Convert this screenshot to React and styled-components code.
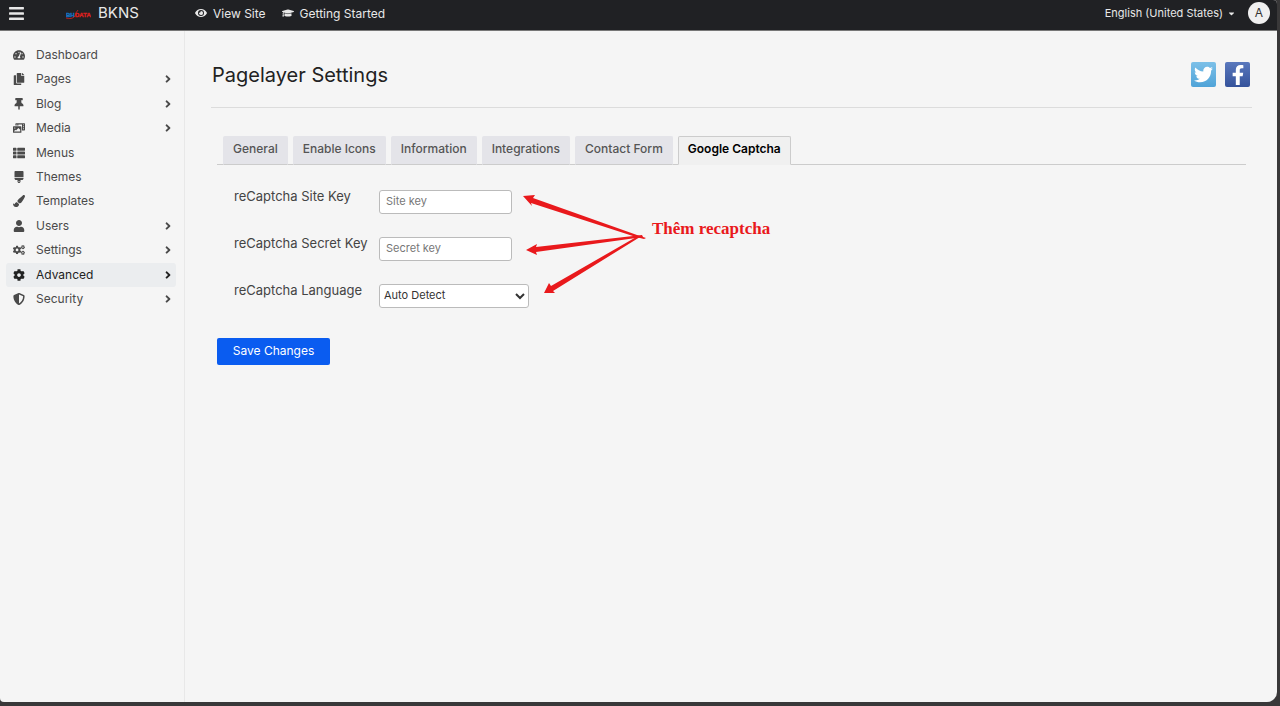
import React from "react";
import styled, { createGlobalStyle, css } from "styled-components";
import {
  FaBars, FaEye, FaGraduationCap, FaCaretDown, FaTachometerAlt, FaCopy, FaThumbtack,
  FaPhotoVideo, FaThList, FaBrush, FaPaintBrush, FaUser, FaCogs, FaCog, FaShieldAlt,
  FaAngleRight, FaTwitter, FaFacebookF,
} from "react-icons/fa";

const GlobalStyle = createGlobalStyle`
  *, *::before, *::after { box-sizing: border-box; }
  body {
    margin: 0;
    background: #393839;
    color: #444;
    font: 400 12px/18px Inter, "Liberation Sans", sans-serif;
  }
  button, input, select { font: inherit; }
`;

const Window = styled.div`
  display: flex;
  flex-direction: column;
  min-height: calc(100vh - 4px);
  margin: 0 3px 4px 0;
  overflow: hidden;
  background: #f5f5f5;
  border-radius: 0 4px 10px 4px;
`;

const TopBar = styled.header`
  display: flex;
  align-items: center;
  height: 31px;
  padding: 0 7px 4px 8px;
  background: #202124;
  border-bottom: 1px solid #777;
  color: #e8e8e8;
`;

const MenuButton = styled.button`
  display: flex;
  padding: 0;
  border: 0;
  background: none;
  color: inherit;
  font-size: 17px;
`;

const Brand = styled.a`
  display: flex;
  align-items: center;
  gap: 7px;
  width: 129px;
  margin-left: 41px;
  color: inherit;
  font-size: 15px;
  text-decoration: none;
`;

const TopLink = styled.a`
  display: flex;
  align-items: center;
  gap: 6px;
  margin-right: 16px;
  padding-top: 2px;
  color: inherit;
  text-decoration: none;
  svg { width: auto; height: 12px; margin-bottom: 2px; }
`;

const LanguageButton = styled.button`
  display: flex;
  align-items: center;
  gap: 4px;
  margin-left: auto;
  padding: 0;
  border: 0;
  background: none;
  color: inherit;
  font-size: 11px;
  svg { font-size: 9px; }
`;

const Avatar = styled.button`
  width: 22px;
  height: 22px;
  margin-left: 12px;
  padding: 0;
  border: 0;
  border-radius: 50%;
  background: #f0f0f0;
  color: #333;
  line-height: 22px;
`;

const Body = styled.div`
  display: flex;
  flex: 1;
`;

const Sidebar = styled.nav`
  flex: 0 0 185px;
  padding: 12px 8px 12px 6px;
  border-right: 1px solid #e8e8e8;
`;

const MenuList = styled.ul`
  display: flex;
  flex-direction: column;
  justify-content: space-between;
  min-height: 268px;
  margin: 0;
  padding: 0;
  list-style: none;
`;

const MenuLink = styled.a`
  display: grid;
  grid-template-columns: 14px 1fr auto;
  align-items: center;
  column-gap: 10px;
  height: 24px;
  padding: 0 2px 0 6px;
  border-radius: 3px;
  color: #4a4a4a;
  text-decoration: none;
  > svg:first-child { justify-self: center; width: auto; height: 12px; }
  > svg:last-child { font-size: 12px; }
  ${(p) => p.$active && css`
    background: #ebedef;
    color: #222;
  `}
`;

const Main = styled.main`
  flex: 1;
  min-width: 0;
  padding: 26px 25px 26px 26px;
`;

const PageHead = styled.div`
  display: flex;
  align-items: flex-start;
  justify-content: space-between;
  padding: 5px 2px 19px 1px;
  border-bottom: 1px solid #dcdcdc;
`;

const Title = styled.h1`
  margin: 0;
  color: #222;
  font-size: 20px;
  font-weight: 400;
  line-height: 26px;
`;

const Social = styled.div`
  display: flex;
  gap: 9px;
`;

const SocialLink = styled.a`
  display: flex;
  align-items: center;
  justify-content: center;
  width: 25px;
  height: 25px;
  border-radius: 2px;
  background: ${(p) => p.$fill};
  color: #fff;
  font-size: 20px;
`;

const Panel = styled.form`
  padding: 28px 6px 0;
`;

const TabList = styled.div`
  display: flex;
  gap: 5px;
  padding-left: 6px;
  border-bottom: 1px solid #ccc;
`;

const Tab = styled.button`
  height: 29px;
  margin-bottom: -1px;
  padding: 0 9px 3px;
  border: 1px solid ${(p) => (p.$active ? "#ccc" : "#e4e4e9")};
  border-bottom-color: ${(p) => (p.$active ? "#f0f0f0" : "#ccc")};
  border-radius: 2px 2px 0 0;
  background: ${(p) => (p.$active ? "#f0f0f0" : "#e4e4e9")};
  color: ${(p) => (p.$active ? "#000" : "#555")};
  font-weight: ${(p) => (p.$active ? 600 : 500)};
`;

const Fields = styled.div`
  position: relative;
  display: grid;
  row-gap: 20px;
  padding: 22px 0 30px 17px;
`;

const Field = styled.div`
  display: grid;
  grid-template-columns: 145px 1fr;
  align-items: end;
`;

const Label = styled.label`
  padding-bottom: 9px;
  color: #444;
  font-size: 13px;
`;

const control = css`
  height: 24px;
  border: 1px solid #bbb;
  border-radius: 3px;
  background: #fff;
  font-size: 11px;
`;

const TextInput = styled.input`
  ${control}
  width: 133px;
  padding: 0 6px 2px;
  &::placeholder { color: #777; }
`;

const Select = styled.select`
  ${control}
  width: 150px;
  padding: 0 0 2px;
  color: #333;
`;

const SaveButton = styled.button`
  width: 113px;
  height: 27px;
  padding: 0 0 2px;
  border: 0;
  border-radius: 2px;
  background: #0a5cf0;
  color: #fff;
`;

const Note = styled.div`
  position: absolute;
  top: 30px;
  left: 306px;
  display: flex;
  gap: 6px;
  color: #e9191c;
  pointer-events: none;
  span {
    padding-top: 24px;
    font: 700 17px/20px "Liberation Serif", serif;
  }
`;

const MENU = [
  ["Dashboard", FaTachometerAlt, false],
  ["Pages", FaCopy, true],
  ["Blog", FaThumbtack, true],
  ["Media", FaPhotoVideo, true],
  ["Menus", FaThList, false],
  ["Themes", FaBrush, false],
  ["Templates", FaPaintBrush, false],
  ["Users", FaUser, true],
  ["Settings", FaCogs, true],
  ["Advanced", FaCog, true],
  ["Security", FaShieldAlt, true],
];

const TABS = ["General", "Enable Icons", "Information", "Integrations", "Contact Form", "Google Captcha"];

const Logo = () => (
  <svg width="25" height="12" viewBox="0 0 25 12" aria-hidden="true">
    <g fontFamily="Liberation Sans" fontSize="6" fontWeight="700" strokeWidth="0.4">
      <text x="0" y="10" fill="#1673c4" stroke="#1673c4">BH</text>
      <text x="9" y="10" fill="#d8201f" stroke="#d8201f">DATA</text>
    </g>
    <path d="M0 11 Q6 13 9 9 Q10 5 12 3" fill="none" stroke="#d8201f" strokeWidth="0.8" />
  </svg>
);

const TwitterBird = styled(FaTwitter)`
  font-size: 19px;
`;

const Arrows = () => (
  <svg width="123" height="100" viewBox="0 0 123 100" fill="currentColor" aria-hidden="true">
    <path d="M0 1 L12 0 L10 3 L114 40 L123 43 L121 44 L113 42 L8 8 L9 11 Z" />
    <path d="M3 55 L14 49 L13 52 L119 40 L120 42 L13 57 L14 60 Z" />
    <path d="M21 98 L26 88 L28 91 L115 41 L117 42 L30 96 L32 98 Z" />
  </svg>
);

export default function App() {
  return (
    <>
      <GlobalStyle />
      <Window>
        <TopBar>
          <MenuButton type="button" aria-label="Toggle menu"><FaBars /></MenuButton>
          <Brand href="#"><Logo />BKNS</Brand>
          <TopLink href="#"><FaEye />View Site</TopLink>
          <TopLink href="#"><FaGraduationCap />Getting Started</TopLink>
          <LanguageButton type="button">English (United States)<FaCaretDown /></LanguageButton>
          <Avatar type="button">A</Avatar>
        </TopBar>
        <Body>
          <Sidebar>
            <MenuList>
              {MENU.map(([name, Icon, nested]) => (
                <li key={name}>
                  <MenuLink href="#" $active={name === "Advanced"}>
                    <Icon />
                    <span>{name}</span>
                    {nested && <FaAngleRight />}
                  </MenuLink>
                </li>
              ))}
            </MenuList>
          </Sidebar>
          <Main>
            <PageHead>
              <Title>Pagelayer Settings</Title>
              <Social>
                <SocialLink href="#" aria-label="Twitter" $fill="linear-gradient(#7cc0e8, #4fa3d8)"><TwitterBird /></SocialLink>
                <SocialLink href="#" aria-label="Facebook" $fill="linear-gradient(#5a78bd, #35539b)"><FaFacebookF /></SocialLink>
              </Social>
            </PageHead>
            <Panel onSubmit={(e) => e.preventDefault()}>
              <TabList role="tablist">
                {TABS.map((name) => (
                  <Tab key={name} type="button" role="tab" aria-selected={name === "Google Captcha"} $active={name === "Google Captcha"}>
                    {name}
                  </Tab>
                ))}
              </TabList>
              <Fields>
                <Field>
                  <Label htmlFor="site-key">reCaptcha Site Key</Label>
                  <TextInput id="site-key" placeholder="Site key" />
                </Field>
                <Field>
                  <Label htmlFor="secret-key">reCaptcha Secret Key</Label>
                  <TextInput id="secret-key" placeholder="Secret key" />
                </Field>
                <Field>
                  <Label htmlFor="language">reCaptcha Language</Label>
                  <Select id="language"><option>Auto Detect</option></Select>
                </Field>
                <Note><Arrows /><span>Thêm recaptcha</span></Note>
              </Fields>
              <SaveButton type="submit">Save Changes</SaveButton>
            </Panel>
          </Main>
        </Body>
      </Window>
    </>
  );
}
